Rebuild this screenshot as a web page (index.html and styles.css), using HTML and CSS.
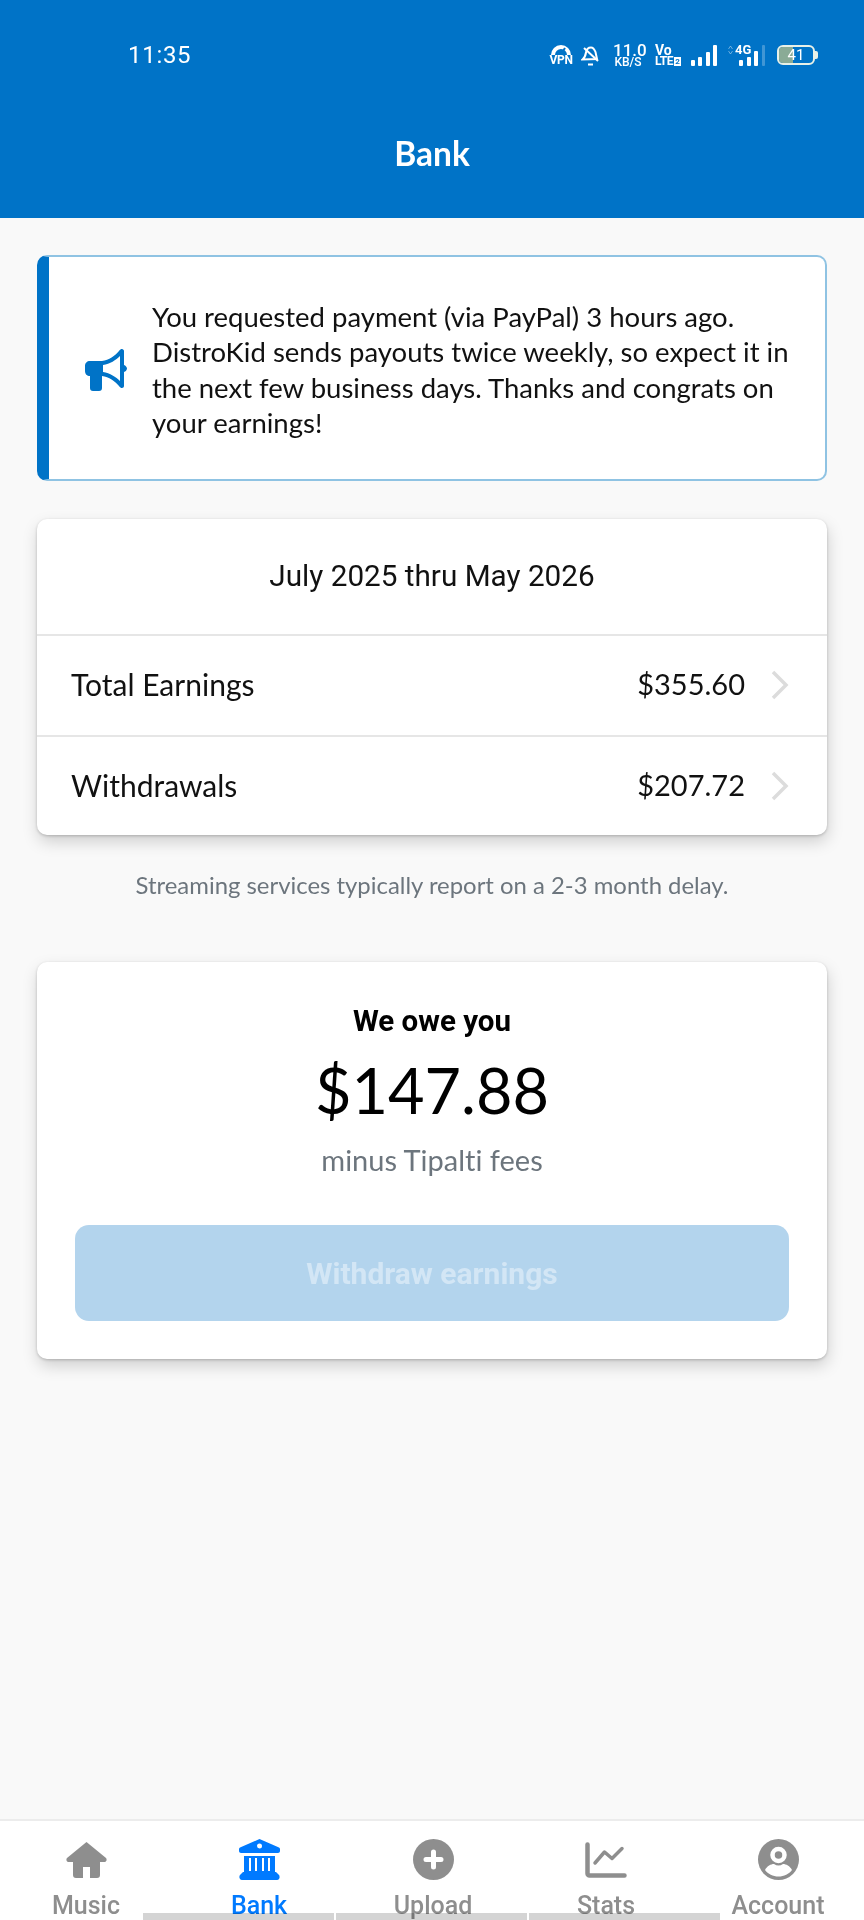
FILE: index.html
```html
<!DOCTYPE html>
<html lang="en">
<head>
<meta charset="utf-8">
<title>Bank</title>
<link rel="stylesheet" href="styles.css">
</head>
<body>
<div class="app">
  <header class="header">
    <div class="status">
      <span class="time">11:35</span>
      <div class="status-icons">
        <div class="vpn">
          <svg width="22" height="11" viewBox="0 0 22 11"><path d="M1 11a10 10 0 0 1 20 0h-4a6 6 0 0 0-12 0z" fill="#fff"/><path d="M11 10l4-6" stroke="#0073c7" stroke-width="2"/></svg>
          <span>VPN</span>
        </div>
        <svg class="bell" width="19" height="22" viewBox="0 0 19 22" fill="none" stroke="#fff" stroke-width="2"><path d="M1.500 15.500c2-1.500 3-3.500 3.500-7 .5-3 2.500-5 5-5s3.500 2 4.500 4.500l1.500 7z"/><path d="M7 20.500h5M3 4l14 13"/></svg>
        <div class="speed">11.0<br>KB/S</div>
        <div class="volte">Vo<br>LTE<i class="two">2</i></div>
        <svg class="signal" width="26" height="21" viewBox="0 0 26 21" fill="#fff"><rect x="0" y="15" width="4" height="6" rx="1"/><rect x="7" y="12" width="4" height="9" rx="1"/><rect x="15" y="7" width="4" height="14" rx="1"/><rect x="22" y="0" width="4" height="21" rx="1"/></svg>
        <div class="sig2">
          <svg class="arrows" width="5" height="10" viewBox="0 0 5 10" fill="none" stroke="#fff" stroke-opacity=".4" stroke-width="1"><path d="M.5 4l2-3 2 3M.5 6l2 3 2-3"/></svg>
          <span class="fourg">4G</span>
          <svg width="26" height="21" viewBox="0 0 26 21" fill="#fff"><rect x="0" y="15" width="4" height="6" rx="1"/><rect x="8" y="12" width="4" height="9" rx="1"/><rect x="15" y="6" width="4" height="15" rx="1"/><rect x="23" y="0" width="3" height="21" rx="1" fill-opacity=".25"/></svg>
        </div>
        <div class="battery"><div class="battery-body"><div class="battery-fill"></div><span class="battery-num">41</span></div><div class="battery-cap"></div></div>
      </div>
    </div>
    <h1 class="title">Bank</h1>
  </header>

  <main class="main">
    <section class="alert">
      <svg class="alert-icon" width="42" height="42" viewBox="0 0 42 42" fill="#0073c7" fill-rule="evenodd"><path d="M37 0c-1 0-2 .5-3 2-4 5-10 9-17 10H5C2 12 0 14 0 17v5c0 3 2 5 5 5v12c0 2 1 3 3 3h6c2 0 3-1 3-3V27c7 1 13 5 17 10 1 1.500 2 2 3 2s2-1 2-2V23c1.500-.5 3-2 3-3.500s-1.500-3-3-3.500V2c0-1-1-2-2-2zM35 7v25c-4-4-10-8-17-9v-7c7-1 13-5 17-9z"/></svg>
      <p class="alert-text">You requested payment (via PayPal) 3 hours ago. DistroKid sends payouts twice weekly, so expect it in the next few business days. Thanks and congrats on your earnings!</p>
    </section>

    <section class="card summary">
      <div class="range">July 2025 thru May 2026</div>
      <div class="row"><span>Total Earnings</span><span class="amount">$355.60</span>
        <svg class="chev" width="18" height="30" viewBox="0 0 18 30" fill="none" stroke="#dcdcdc" stroke-width="3.500"><path d="M2 2l13 13L2 28"/></svg></div>
      <div class="row"><span>Withdrawals</span><span class="amount">$207.72</span>
        <svg class="chev" width="18" height="30" viewBox="0 0 18 30" fill="none" stroke="#dcdcdc" stroke-width="3.500"><path d="M2 2l13 13L2 28"/></svg></div>
    </section>

    <p class="note">Streaming services typically report on a 2-3 month delay.</p>

    <section class="card owe">
      <div class="owe-title">We owe you</div>
      <div class="owe-amount">$147.88</div>
      <div class="owe-fees">minus Tipalti fees</div>
      <button class="withdraw" disabled>Withdraw earnings</button>
    </section>
  </main>

  <nav class="tabs">
    <div class="tab">
      <svg class="ico-home" width="41" height="36" viewBox="0 0 41 36" fill="#8e8e8e"><path d="M20.500 0L1 16c-1.500 2 0 4 2 4h4v13c0 2 1 3 3 3h7V25h7v11h7c2 0 3-1 3-3V20h4c2 0 3.500-2 2-4z"/></svg>
      <span>Music</span>
    </div>
    <div class="tab active">
      <svg width="41" height="41" viewBox="0 0 41 41" fill="#007aff"><path d="M20.500 0L1 8.500C0 9 0 10 0 11v1c0 1 1 2 2 2h37c1 0 2-1 2-2v-1c0-1 0-2-1-2.500zM20.500 4.500a2.500 2.500 0 1 1 0 5 2.500 2.500 0 0 1 0-5z" fill-rule="evenodd"/><path d="M5 17h31v17H5zM10 19v13h2V19zM16 19v13h2V19zM23 19v13h2V19zM29 19v13h2V19z" fill-rule="evenodd"/><path d="M4 33h33l3 3c1 1 1 5-2 5H3c-3 0-3-4-2-5z"/></svg>
      <span>Bank</span>
    </div>
    <div class="tab">
      <svg width="41" height="41" viewBox="0 0 41 41"><circle cx="20.500" cy="20.500" r="20.500" fill="#8e8e8e"/><path d="M20.500 13v15M13 20.500h15" stroke="#fff" stroke-width="5" stroke-linecap="round"/></svg>
      <span>Upload</span>
    </div>
    <div class="tab">
      <svg class="ico-stats" width="42" height="36" viewBox="0 0 42 36" fill="none" stroke="#8e8e8e" stroke-width="4.500" stroke-linecap="round" stroke-linejoin="round"><path d="M2.500 2.500v29a2 2 0 0 0 2 2h35"/><path d="M10 21l9.500-11 7.500 6.500 10-10" stroke-width="3.500"/></svg>
      <span>Stats</span>
    </div>
    <div class="tab">
      <svg width="41" height="41" viewBox="0 0 41 41"><circle cx="20.500" cy="20.500" r="20.500" fill="#8e8e8e"/><circle cx="20.500" cy="16" r="6" fill="#8e8e8e" stroke="#fff" stroke-width="4.500"/><path d="M7 31c2-4 6-6 9-6 3 2 6 2 9 0 3 0 7 2 9 6-3 4-8 6.500-13.500 6.500S10 35 7 31z" fill="#fff"/></svg>
      <span>Account</span>
    </div>
    <div class="gesture"><i></i><i></i><i></i></div>
  </nav>
</div>
</body>
</html>
```
FILE: styles.css
```css
* { box-sizing: border-box; }
html, body { margin: 0; padding: 0; }
body { font-family: "Lato", "Liberation Sans", sans-serif; background: #f9f9f9; color: #111; font-variant-ligatures: none; }
.app { width: 864px; height: 1920px; display: flex; flex-direction: column; overflow: hidden; }

.header { height: 218px; background: #0073c7; color: #fff; display: flex; flex-direction: column; flex: none; }
.status { height: 110px; display: flex; align-items: center; justify-content: space-between; padding: 0 46px 0 128px; }
.time { font-family: "Roboto", sans-serif; font-size: 24px; letter-spacing: .7px; }
.status-icons { display: flex; align-items: center; }
.vpn { display: flex; flex-direction: column; align-items: center; width: 22px; }
.vpn span { font-family: "Roboto", sans-serif; font-size: 12px; font-weight: 700; line-height: 11px; letter-spacing: -.3px; }
.bell { margin-left: 9px; }
.speed { width: 30px; margin-left: 13px; text-align: center; font-family: "Roboto", sans-serif; font-size: 12px; font-weight: 500; line-height: 11px; }
.speed::first-line { font-size: 17px; line-height: 14px; }
.volte { width: 26px; margin-left: 12px; font-family: "Roboto", sans-serif; font-size: 12px; font-weight: 700; line-height: 11px; letter-spacing: -.4px; white-space: nowrap; }
.volte::first-line { font-size: 14px; line-height: 12px; letter-spacing: 0; }
.two { display: inline-block; margin-left: 1px; font-style: normal; font-size: 8px; line-height: 9px; width: 7px; text-align: center; background: #fff; color: #0073c7; letter-spacing: 0; vertical-align: 1px; }
.signal { margin-left: 10px; }
.sig2 { position: relative; width: 37px; height: 22px; display: flex; justify-content: flex-end; align-items: flex-end; margin-left: 11px; }
.arrows { position: absolute; left: 0; top: 1px; }
.fourg { position: absolute; left: 7px; top: -1px; font-family: "Roboto", sans-serif; font-size: 13px; font-weight: 700; line-height: 13px; }
.battery { display: flex; align-items: center; margin-left: 12px; }
.battery-body { position: relative; width: 38px; height: 20px; border: 2px solid #e8f1e8; border-radius: 6px; overflow: hidden; display: flex; align-items: center; justify-content: center; }
.battery-fill { position: absolute; left: 0; top: 0; bottom: 0; width: 41%; background: #8aab96; }
.battery-num { position: relative; font-family: "Roboto", sans-serif; font-size: 15px; line-height: 14px; }
.battery-cap { width: 3px; height: 8px; background: #e8f1e8; border-radius: 0 2px 2px 0; }
.title { margin: 23px 0 0; text-align: center; font-size: 33.5px; font-weight: 700; line-height: 40px; }

.main { flex: 1; padding: 37px 37px 0; display: flex; flex-direction: column; }
.alert { height: 226px; background: #fff; border: 2px solid #8fc3e3; border-left: 12px solid #0073c7; border-radius: 10px; display: flex; align-items: center; padding: 3px 30px 0 36px; flex: none; }
.alert-icon { flex: none; }
.alert-text { margin: 0 0 0 25px; font-size: 27.5px; line-height: 35.5px; color: #111; }

.card { background: #fff; border-radius: 10px; box-shadow: 0 1px 3px rgba(0,0,0,.2), 1px 7px 16px rgba(0,0,0,.17); flex: none; }
.summary { margin-top: 38px; height: 316px; display: flex; flex-direction: column; }
.range { height: 115px; padding-bottom: 2px; display: flex; align-items: center; justify-content: center; font-family: "Roboto", sans-serif; font-size: 29.7px; color: #111; }
.row { flex: 1; display: flex; align-items: center; padding: 0 38px 2px 34px; border-top: 2px solid #e6e6e6; font-size: 30px; line-height: 36px; color: #111; }
.amount { margin-left: auto; font-size: 29px; }
.chev { margin-left: 26px; margin-top: 2px; }
.note { margin: 35px 0 0; text-align: center; font-size: 23.9px; line-height: 30px; color: #6c757d; }

.owe { margin-top: 62px; height: 397px; display: flex; flex-direction: column; align-items: center; padding: 42px 38px 0; }
.owe-title { font-family: "Roboto", sans-serif; font-weight: 700; font-size: 29.5px; line-height: 34px; color: #000; }
.owe-amount { font-size: 63px; line-height: 80px; margin-top: 12px; color: #000; }
.owe-fees { font-size: 29px; line-height: 36px; margin-top: 12px; color: #6c757d; }
.withdraw { width: 100%; height: 96px; margin-top: 47px; border: 0; border-radius: 14px; background: #b3d4ed; color: #d3e6f5; font-family: "Roboto", sans-serif; font-weight: 700; font-size: 30px; }

.tabs { position: relative; height: 101px; flex: none; background: #fff; border-top: 2px solid #ececec; display: grid; grid-template-columns: 172px 174px 174px 172px 172px; }
.tab { display: flex; flex-direction: column; align-items: center; justify-content: flex-start; padding-top: 18px; color: #8e8e8e; font-family: "Roboto", sans-serif; font-size: 25px; font-weight: 500; position: relative; }
.tab svg { flex: none; }
.tab span { position: absolute; top: 70px; line-height: 30px; }
.ico-home, .ico-stats { margin-top: 3px; }
.tab.active { color: #007aff; }
.gesture { position: absolute; left: 143px; top: 92px; display: flex; gap: 2px; mix-blend-mode: multiply; }
.gesture i { display: block; height: 7px; width: 191px; background: #d4d4d4; }
```
